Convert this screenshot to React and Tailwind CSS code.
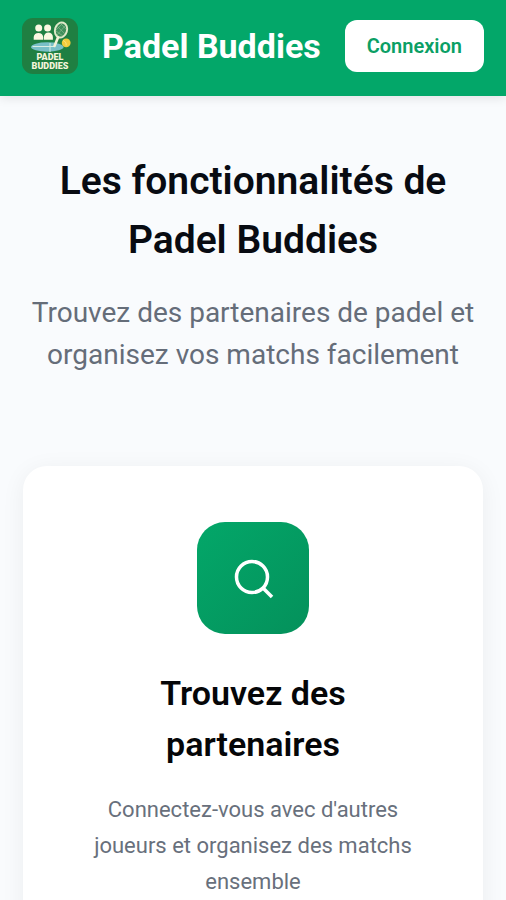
function Logo() {
  return (
    <svg viewBox="0 0 56 56" className="size-14 shrink-0" role="img" aria-label="Padel Buddies">
      <rect width="56" height="56" rx="11" fill="#1f7f42" />
      <g fill="#fbf8e2">
        <circle cx="16.700" cy="9.900" r="3.500" />
        <circle cx="25.600" cy="9.900" r="3.500" />
        <path d="M11.700 21.700v-2.700a4.800 4.800 0 0 1 9.500 0v2.700zM21.900 21.700v-2.700a4.500 4.500 0 0 1 9 0v2.700z" />
      </g>
      <ellipse cx="25.300" cy="29" rx="16.300" ry="4.700" fill="#79bfc7" />
      <path d="M10.500 28.500h22M28 25v9" stroke="#d9eee3" strokeWidth="1" />
      <ellipse cx="39" cy="12" rx="6" ry="7.600" transform="rotate(18 39 12)" fill="#3f8f5b" stroke="#dfe9c9" strokeWidth="1.900" />
      <path d="M35 8l8 8M34 13l7 5M38 5l6 6M35 17l8-9M34 12l6-6" stroke="#8fbd93" strokeWidth="0.600" />
      <path d="M36 19.500l-3.500 8.500" stroke="#f3f1d8" strokeWidth="2.600" strokeLinecap="round" />
      <circle cx="44.200" cy="24.800" r="4.400" fill="#f3cb3b" />
      <path d="M41 22.500c2 .5 3.500 2.500 3.200 5" fill="none" stroke="#fbe88e" strokeWidth="0.900" />
      <g fill="#f5f4dc" fontFamily="Roboto, sans-serif" fontWeight="900" fontSize="9" textAnchor="middle">
        <text x="28" y="42">PADEL</text>
        <text x="28" y="51">BUDDIES</text>
      </g>
    </svg>
  );
}

function SearchIcon() {
  return (
    <svg viewBox="0 0 45 45" className="size-[45px]" fill="none" stroke="white" strokeWidth="3.500" aria-hidden="true">
      <circle cx="21" cy="21" r="15.500" />
      <path d="M32 32l9 9" />
    </svg>
  );
}

export default function App() {
  return (
    <div className="min-h-screen bg-[#f9fbfd] font-['Roboto',sans-serif]">
      <header className="flex items-center bg-[#03a769] px-[22px] pt-[18px] pb-[22px] shadow-[0_2px_10px_rgba(0,0,0,0.1)]">
        <Logo />
        <span className="ml-6 text-[34px] leading-[56px] font-bold whitespace-nowrap text-white">Padel Buddies</span>
        <button type="button" className="ml-auto h-[52px] rounded-xl bg-white px-[22px] text-[20px] font-semibold text-[#0b9f65]">
          Connexion
        </button>
      </header>
      <main className="px-[23px] pb-14">
        <section className="pt-14 text-center">
          <h1 className="text-[39px] leading-[59px] font-semibold text-[#080b12]">Les fonctionnalités de Padel Buddies</h1>
          <p className="mt-[22px] text-[28px] leading-[42px] text-[#656d79]">
            Trouvez des partenaires de padel et organisez vos matchs facilement
          </p>
        </section>
        <article className="mt-[90px] flex flex-col items-center rounded-[24px] bg-white px-14 py-14 text-center shadow-[0_4px_24px_rgba(0,0,0,0.06)]">
          <div className="flex size-28 items-center justify-center rounded-[28px] bg-linear-to-br from-[#03a769] to-[#04915b]">
            <SearchIcon />
          </div>
          <h2 className="mt-[34px] max-w-60 text-[34px] leading-[51px] font-semibold text-[#050608]">Trouvez des partenaires</h2>
          <p className="mt-[22px] text-[22px] leading-9 text-[#68707c]">
            Connectez-vous avec d'autres joueurs et organisez des matchs ensemble
          </p>
        </article>
      </main>
    </div>
  );
}
